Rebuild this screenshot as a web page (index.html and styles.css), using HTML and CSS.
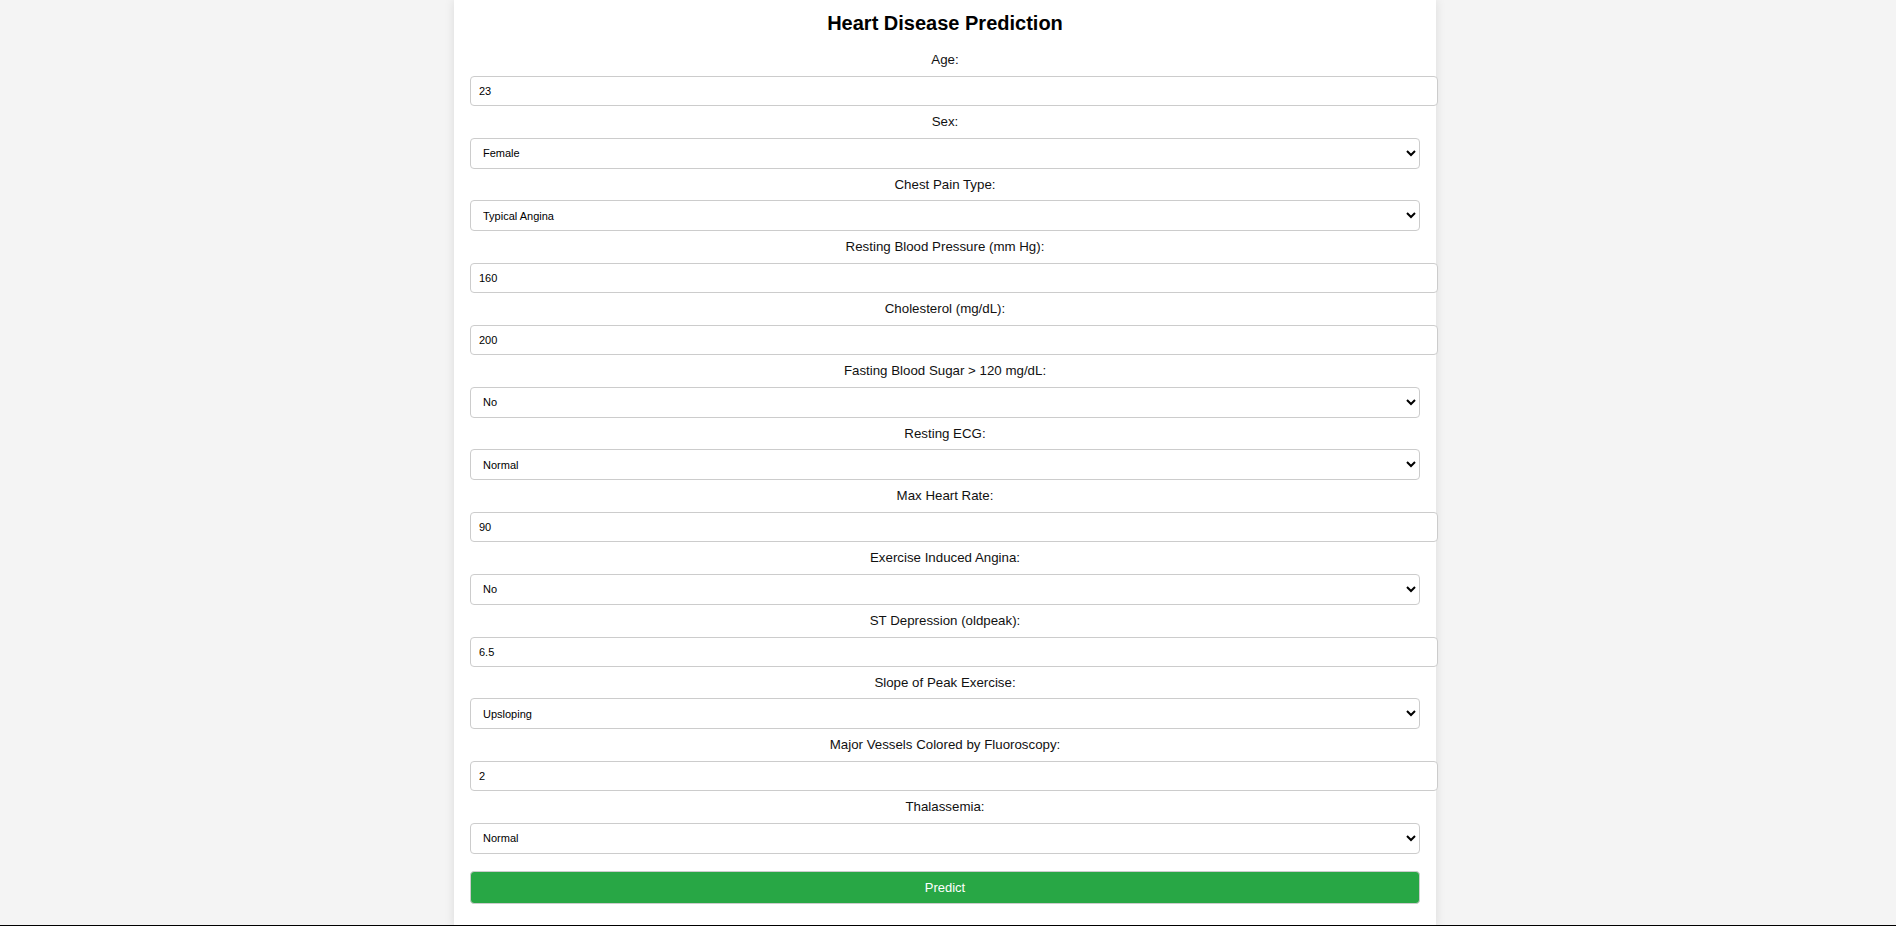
FILE: index.html
```html
<!DOCTYPE html>
<html lang="en">
<head>
<meta charset="utf-8">
<title>Heart Disease Prediction</title>
<link rel="stylesheet" href="styles.css">
</head>
<body>
<div class="container">
  <h2 class="title">Heart Disease Prediction</h2>
  <form class="form">
    <label class="label" for="age">Age:</label>
    <input class="field" id="age" type="text" inputmode="numeric" value="23">

    <label class="label" for="sex">Sex:</label>
    <select class="choice" id="sex"><option>Female</option><option>Male</option></select>

    <label class="label" for="cp">Chest Pain Type:</label>
    <select class="choice" id="cp"><option>Typical Angina</option><option>Atypical Angina</option><option>Non-anginal Pain</option><option>Asymptomatic</option></select>

    <label class="label" for="bp">Resting Blood Pressure (mm Hg):</label>
    <input class="field" id="bp" type="text" inputmode="numeric" value="160">

    <label class="label" for="chol">Cholesterol (mg/dL):</label>
    <input class="field" id="chol" type="text" inputmode="numeric" value="200">

    <label class="label" for="fbs">Fasting Blood Sugar &gt; 120 mg/dL:</label>
    <select class="choice" id="fbs"><option>No</option><option>Yes</option></select>

    <label class="label" for="ecg">Resting ECG:</label>
    <select class="choice" id="ecg"><option>Normal</option><option>ST-T Abnormality</option><option>Left Ventricular Hypertrophy</option></select>

    <label class="label" for="hr">Max Heart Rate:</label>
    <input class="field" id="hr" type="text" inputmode="numeric" value="90">

    <label class="label" for="exang">Exercise Induced Angina:</label>
    <select class="choice" id="exang"><option>No</option><option>Yes</option></select>

    <label class="label" for="oldpeak">ST Depression (oldpeak):</label>
    <input class="field" id="oldpeak" type="text" inputmode="decimal" value="6.5">

    <label class="label" for="slope">Slope of Peak Exercise:</label>
    <select class="choice" id="slope"><option>Upsloping</option><option>Flat</option><option>Downsloping</option></select>

    <label class="label" for="ca">Major Vessels Colored by Fluoroscopy:</label>
    <input class="field" id="ca" type="text" inputmode="numeric" value="2">

    <label class="label" for="thal">Thalassemia:</label>
    <select class="choice" id="thal"><option>Normal</option><option>Fixed Defect</option><option>Reversible Defect</option></select>

    <button class="submit" type="button">Predict</button>
  </form>
</div>
<div class="bottom-line"></div>
</body>
</html>
```
FILE: styles.css
```css
html, body {
  margin: 0;
  background: #f4f4f4;
}
body {
  padding: 0 6px 0 0;
  font-family: "Liberation Sans", Arial, sans-serif;
  color: #000;
}
.container {
  width: 950px;
  margin: 0 auto;
  padding: 12px 16px 24px;
  background: #fff;
  box-shadow: 0 0 10px rgba(0, 0, 0, 0.1);
}
.title {
  margin: 0 0 17px;
  font-size: 20px;
  line-height: 23px;
  font-weight: bold;
  text-align: center;
}
.form {
  margin: 0;
}
.label {
  display: block;
  margin: 8px 0;
  font-size: 13.3px;
  line-height: 15.75px;
  text-align: center;
  color: #111;
}
.field {
  display: block;
  box-sizing: content-box;
  width: 100%;
  height: 12px;
  margin: 0;
  padding: 8px;
  border: 1px solid #ccc;
  border-radius: 4px;
  font-family: "Liberation Sans", Arial, sans-serif;
  font-size: 11px;
  color: #000;
  background: #fff;
}
.choice {
  display: block;
  box-sizing: border-box;
  width: 100%;
  height: 31px;
  margin: 0;
  padding: 0 8px;
  border: 1px solid #ccc;
  border-radius: 4px;
  font-family: "Liberation Sans", Arial, sans-serif;
  font-size: 11px;
  color: #000;
  background-color: #fff;
}
.submit {
  display: block;
  box-sizing: border-box;
  width: 100%;
  height: 33px;
  margin: 17px 0 0;
  padding: 8px;
  border: 1px solid #ccc;
  border-radius: 4px;
  background: #28a745;
  color: #fff;
  font-family: "Liberation Sans", Arial, sans-serif;
  font-size: 13px;
  cursor: pointer;
}
.bottom-line {
  position: fixed;
  left: 0;
  right: 0;
  bottom: 0;
  height: 1px;
  background: #000;
}
```
